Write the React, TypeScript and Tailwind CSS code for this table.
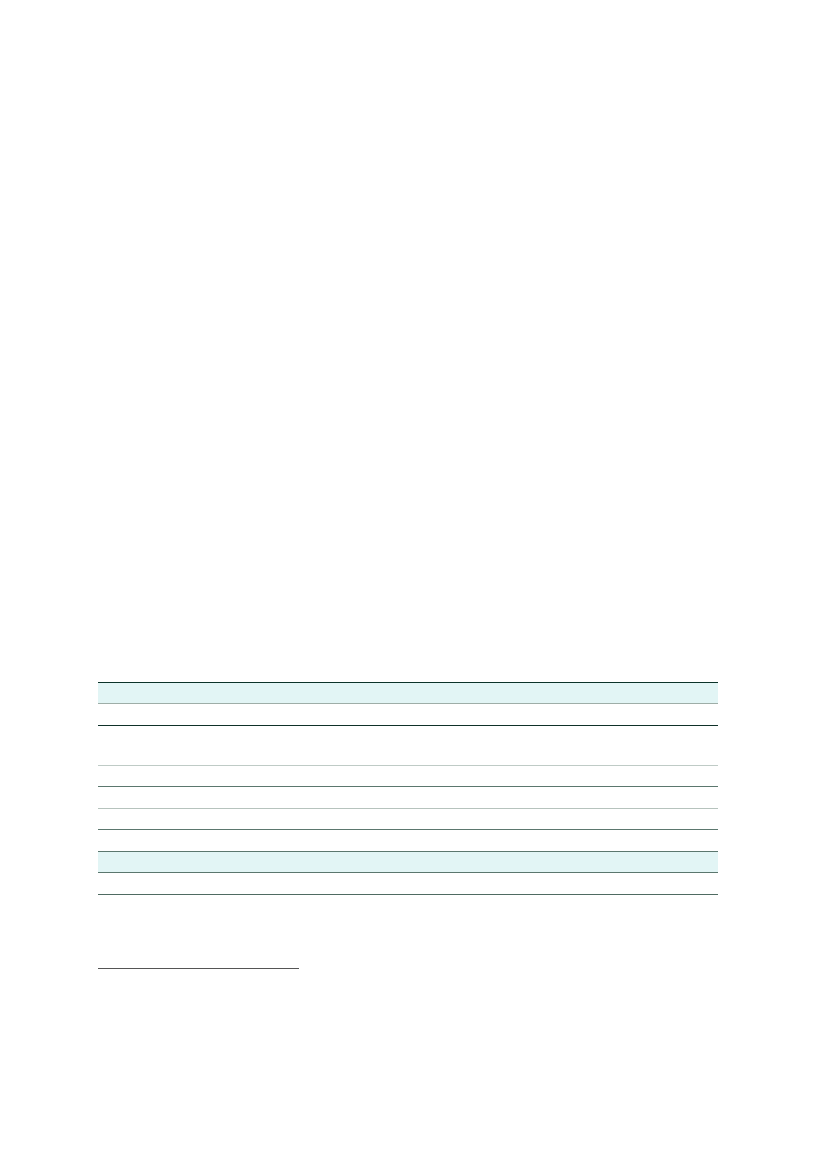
const rows = [
  { h: 'h-[22px]', border: 'border-[#9eaea8]', fill: 'bg-[#e2f5f5]', top: true },
  { h: 'h-[22px]', border: 'border-[#0f3129]', fill: '' },
  { h: 'h-[40px]', border: 'border-[#bfcbc6]', fill: '' },
  { h: 'h-[21px]', border: 'border-[#5b776e]', fill: '' },
  { h: 'h-[22px]', border: 'border-[#b6c3bd]', fill: '' },
  { h: 'h-[21px]', border: 'border-[#5b776e]', fill: '' },
  { h: 'h-[22px]', border: 'border-[#5b776e]', fill: '' },
  { h: 'h-[21px]', border: 'border-[#5b776e]', fill: 'bg-[#e2f5f5]' },
  { h: 'h-[22px]', border: 'border-[#4f6b62]', fill: '' },
];

export default function App() {
  return (
    <div className="w-[827px] h-[1169px] bg-white pt-[682px] pl-[98px]" style={{ fontFamily: '"Liberation Sans", Arial, sans-serif' }}>
      {/* table */}
      <div className="w-[620px] flex flex-col">
        {rows.map((r, i) => (
          <div
            key={i}
            className={`grid grid-cols-[306px_314px] border-b ${r.h} ${r.border} ${r.fill} ${r.top ? 'border-t border-t-[#0b3329]' : ''}`}
          >
            <div />
            <div />
          </div>
        ))}
      </div>

      {/* footnote rule */}
      <div className="mt-[73px] w-[201px] h-px bg-[#555555]" />
    </div>
  );
}
